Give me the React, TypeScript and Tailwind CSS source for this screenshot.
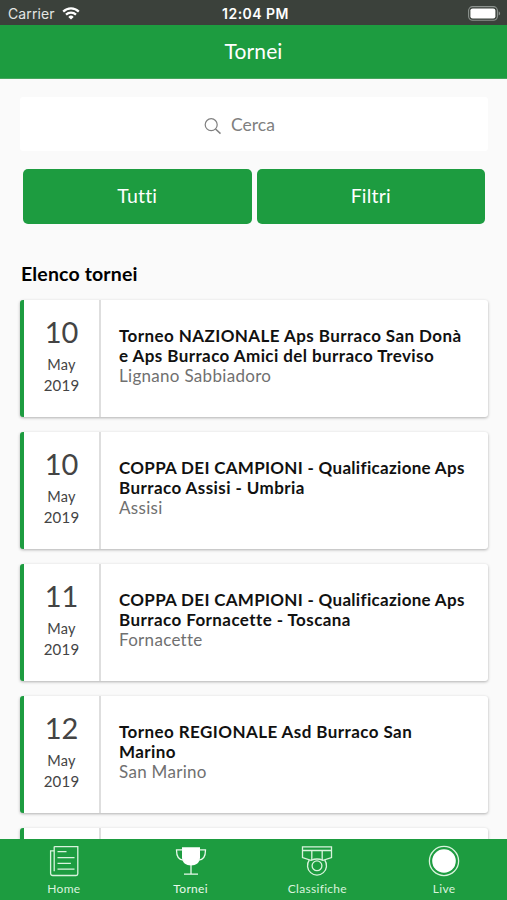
import React from "react";
import clsx from "clsx";

const tournaments = [
  {
    day: "10",
    lines: ["Torneo NAZIONALE Aps Burraco San Donà", "e Aps Burraco Amici del burraco Treviso"],
    place: "Lignano Sabbiadoro",
  },
  {
    day: "10",
    lines: ["COPPA DEI CAMPIONI - Qualificazione Aps", "Burraco Assisi - Umbria"],
    place: "Assisi",
  },
  {
    day: "11",
    lines: ["COPPA DEI CAMPIONI - Qualificazione Aps", "Burraco Fornacette - Toscana"],
    place: "Fornacette",
  },
  {
    day: "12",
    lines: ["Torneo REGIONALE Asd Burraco San", "Marino"],
    place: "San Marino",
  },
  { day: "", lines: [], place: "" },
];

function WifiIcon() {
  return (
    <svg width="18" height="13" viewBox="0 0 18 13" fill="none" stroke="#fff" strokeWidth="2.2">
      <path d="M1.2 4.6a11 11 0 0 1 15.6 0" />
      <path d="M4 7.6a7.1 7.1 0 0 1 10 0" />
      <path d="M9 12.6 6.3 9.9a3.8 3.8 0 0 1 5.4 0z" fill="#fff" stroke="none" />
    </svg>
  );
}

function BatteryIcon() {
  return (
    <svg width="33" height="15" viewBox="0 0 33 15">
      <rect x="0.6" y="0.6" width="28.8" height="13.6" rx="4" fill="none" stroke="#8d938f" strokeWidth="1.1" />
      <rect x="2.4" y="2.4" width="25" height="10" rx="2.2" fill="#fff" />
      <path d="M30.7 5.2c1.9.8 1.9 3.6 0 4.4z" fill="#8d938f" />
    </svg>
  );
}

function SearchIcon() {
  return (
    <svg width="18" height="18" viewBox="0 0 18 18" fill="none" stroke="#808080" strokeWidth="1.2">
      <circle cx="7.2" cy="7.7" r="6" />
      <path d="m11.5 12 5 4.6" strokeWidth="1.5" />
    </svg>
  );
}

function NewsIcon() {
  return (
    <svg width="32" height="32" viewBox="0 0 32 32" fill="none" stroke="#d9f3dd" strokeWidth="1.3">
      <path d="M6.2 1.6h23.6v27.2a1.7 1.7 0 0 1-1.7 1.7H4.8a2.2 2.2 0 0 1-2.2-2V5.9h3.6" />
      <path d="M6.2 1.6v24.6" />
      <path d="M9.5 6.6h9M9.5 12.6h17M9.5 18.4h13.4M9.5 24.2h17" />
    </svg>
  );
}

function TrophyIcon() {
  return (
    <svg width="32" height="32" viewBox="0 0 32 32" fill="none" stroke="#e9f9eb" strokeWidth="1.3">
      <path d="M7 2.2h18v10.2c0 5-4 8-9 8s-9-3-9-8z" fill="#fff" stroke="none" />
      <path d="M7.4 4.9H1.5c0 6.2 2.2 10 7 10.2M24.6 4.9h5.9c0 6.2-2.2 10-7 10.2" />
      <path d="M16 20v8.7M9 29.1h14" />
    </svg>
  );
}

function MedalIcon() {
  return (
    <svg width="32" height="32" viewBox="0 0 32 32" fill="none" stroke="#d9f3dd" strokeWidth="1.3">
      <path d="M1.5 1.8h29v10.8l-8.5 2.7q-6-2.6-12 0l-8.5-2.7zM1.5 5.5h29" />
      <path d="M10.8 5.5v9.4M21.2 5.5v9.4" />
      <path d="M8.3 15a9.5 9.5 0 1 0 15.4 0" />
      <circle cx="16" cy="20.8" r="4.9" />
    </svg>
  );
}

function LiveIcon() {
  return (
    <svg width="32" height="32" viewBox="0 0 32 32">
      <circle cx="16" cy="16" r="14.6" fill="none" stroke="#d9f3dd" strokeWidth="1.3" />
      <circle cx="16" cy="16" r="11.8" fill="#fff" />
    </svg>
  );
}

const tabs = [
  { label: "Home", icon: <NewsIcon /> },
  { label: "Tornei", icon: <TrophyIcon /> },
  { label: "Classifiche", icon: <MedalIcon /> },
  { label: "Live", icon: <LiveIcon /> },
];

function TournamentCard({ day, lines, place }: { day: string; lines: string[]; place: string }) {
  return (
    <div className="flex h-[117px] shrink-0 overflow-hidden rounded-[3px] border-l-4 border-[#1d9c40] bg-white shadow-[0_1px_3px_rgba(0,0,0,0.3)]">
      <div className="flex w-[77px] shrink-0 flex-col items-center border-r-2 border-[#dedede] pt-[15px] text-[#444]">
        <span className="h-[39px] text-[29px] leading-[34px]">{day}</span>
        {day && <span className="text-[14.5px] leading-[21px] tracking-[0.3px]">May</span>}
        {day && <span className="text-[15px] leading-[20px] tracking-[0.2px]">2019</span>}
      </div>
      <div className="flex flex-col justify-center whitespace-nowrap pb-[5px] pl-[18px]">
        {lines.map((line) => (
          <span
            key={line}
            className={clsx(
              "text-[17px] font-bold leading-[19.7px] text-[#111]",
              line.startsWith("COPPA") ? "tracking-[0.3px]" : "tracking-[0.42px]"
            )}
          >
            {line}
          </span>
        ))}
        <span className="text-[17px] leading-[21px] tracking-[0.3px] text-[#707070]">{place}</span>
      </div>
    </div>
  );
}

function App() {
  return (
    <div className="flex h-[900px] w-[507px] flex-col overflow-hidden bg-[#fafafa] font-['Lato',sans-serif]">
      <div className="grid h-[25px] shrink-0 grid-cols-3 items-center bg-[#3b413b] pl-2 pr-[6px] pt-[2px] font-['Inter',sans-serif] text-[14px] text-white">
        <div className="flex items-center gap-[7px]">
          <span className="tracking-[0.1px] text-[#e4e6e4]">Carrier</span>
          <WifiIcon />
        </div>
        <span className="pl-[2px] text-center font-semibold tracking-[0.45px]">12:04 PM</span>
        <div className="flex justify-end">
          <BatteryIcon />
        </div>
      </div>

      <header className="flex h-[54px] shrink-0 items-center justify-center border-b border-[#47a55e] bg-[#1d9c40] pb-[2px] text-[21px] tracking-[0.15px] text-white">
        Tornei
      </header>

      <main className="flex min-h-0 flex-1 flex-col overflow-hidden px-5 pt-[18px] pr-[19px]">
        <div className="flex h-[54px] shrink-0 items-center justify-center gap-[9px] rounded-[3px] bg-white pr-[29px] pt-[3px] text-[17.5px] text-[#808080]">
          <SearchIcon />
          <span>Cerca</span>
        </div>
        <div className="mt-[18px] flex shrink-0 gap-[5px] px-[3px]">
          {["Tutti", "Filtri"].map((label) => (
            <button
              key={label}
              className="h-[55px] flex-1 rounded-[5px] bg-[#1d9c40] pb-px text-[19.5px] tracking-[0.2px] text-white"
            >
              {label}
            </button>
          ))}
        </div>
        <h2 className="mt-[36px] h-[40px] shrink-0 pl-px text-[19.5px] font-bold leading-[28px] tracking-[0.15px] text-black">
          Elenco tornei
        </h2>
        <div className="flex flex-col gap-[15px]">
          {tournaments.map((t, i) => (
            <TournamentCard key={i} {...t} />
          ))}
        </div>
      </main>

      <nav className="grid h-[61px] shrink-0 grid-cols-4 bg-[#1d9c40] pt-[6px] text-[#d9f3dd]">
        {tabs.map((tab, i) => (
          <div key={tab.label} className={clsx("flex flex-col items-center pl-px", i === 1 && "text-[#e9f9eb]")}>
            {tab.icon}
            <span className="mt-1 text-[12px] leading-[16px] tracking-[0.3px]">{tab.label}</span>
          </div>
        ))}
      </nav>
    </div>
  );
}

export default App;
